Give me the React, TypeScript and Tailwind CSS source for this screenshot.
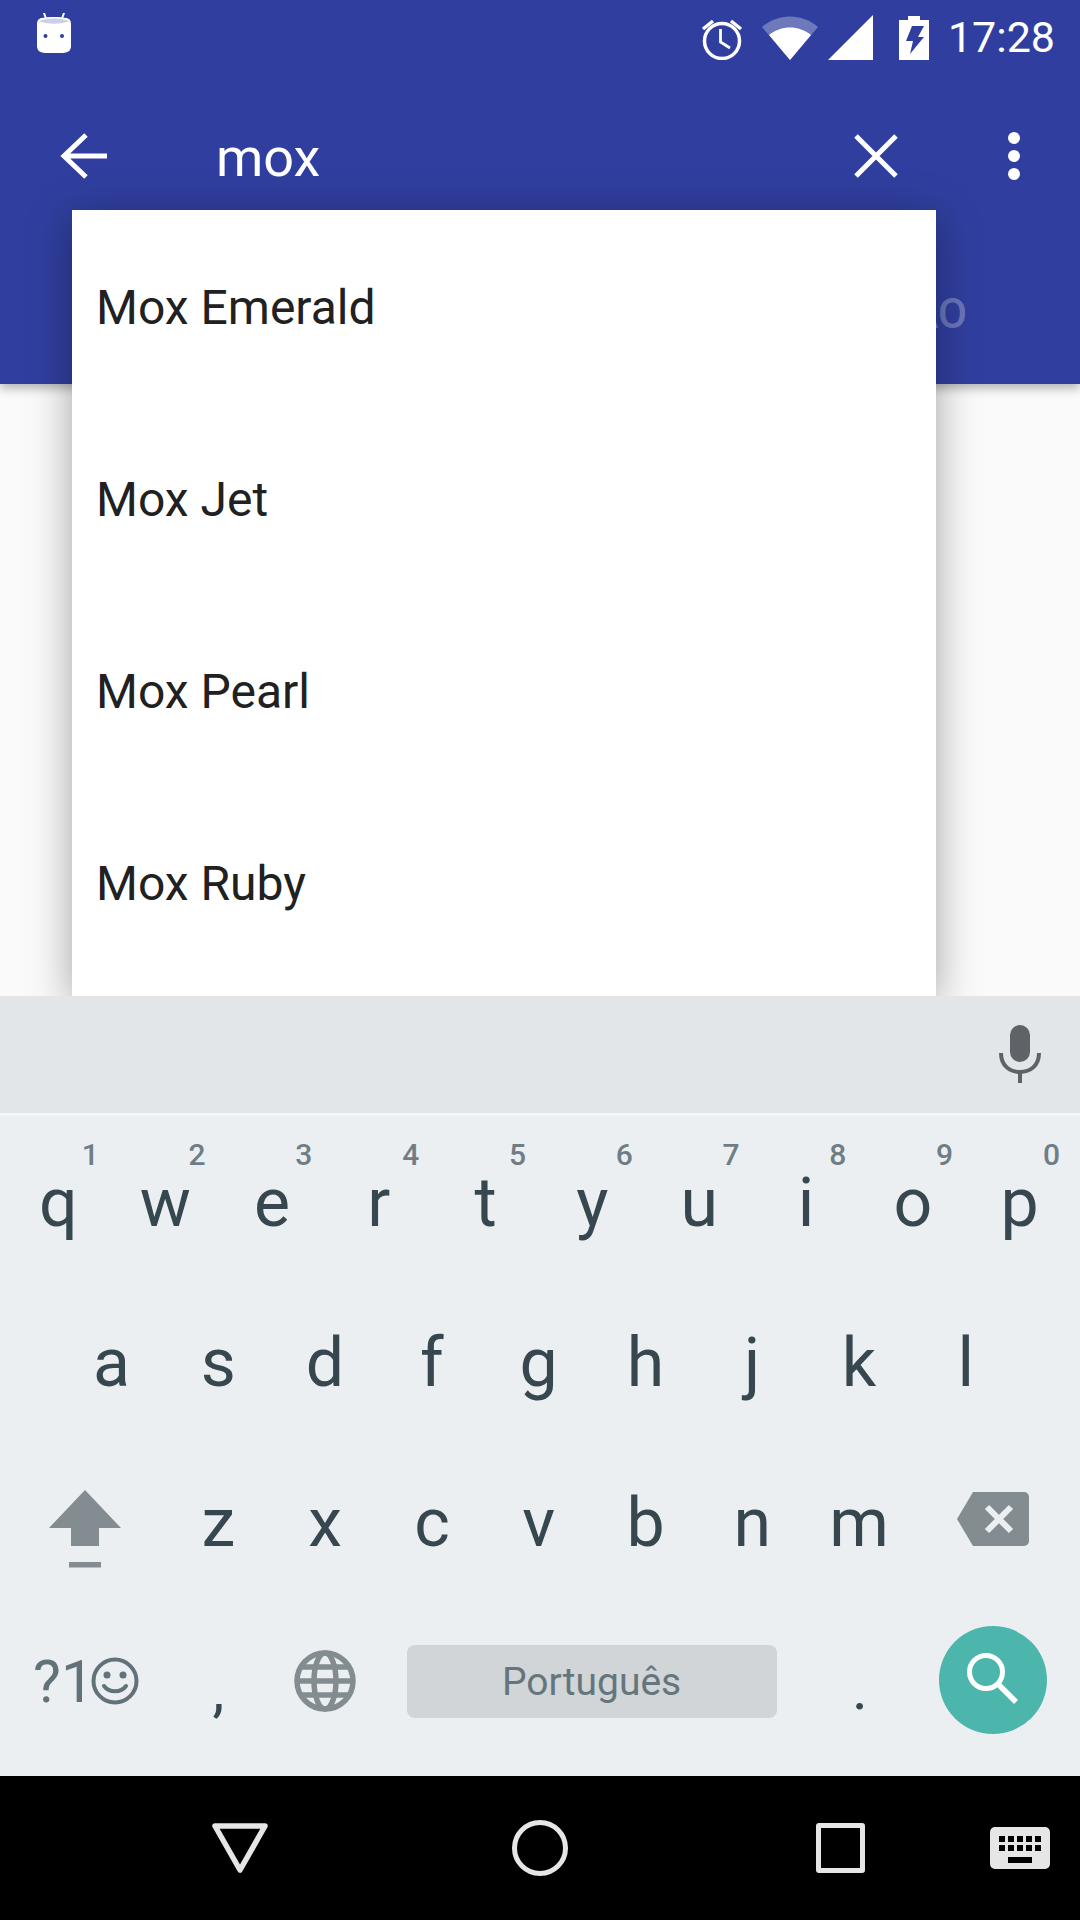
const FONT = "font-['Roboto',sans-serif]";

const rowOne = [
  ["q", "1"],
  ["w", "2"],
  ["e", "3"],
  ["r", "4"],
  ["t", "5"],
  ["y", "6"],
  ["u", "7"],
  ["i", "8"],
  ["o", "9"],
  ["p", "0"],
];
const rowTwo = ["a", "s", "d", "f", "g", "h", "j", "k", "l"];
const rowThree = ["z", "x", "c", "v", "b", "n", "m"];
const results = ["Mox Emerald", "Mox Jet", "Mox Pearl", "Mox Ruby"];

function StatusBar() {
  return (
    <div className="flex h-[75px] items-center pl-[37px] pr-[25px] text-white">
      <svg width="34" height="40" viewBox="0 0 34 40" className="mt-[-9px]">
        <path d="M7 0l2.500 7M27 0l-2.500 7" stroke="#fff" strokeWidth="2" strokeLinecap="round" />
        <path d="M0 11c0-3 1-5 4-6 8-1.500 18-1.500 26 0 3 1 4 3 4 6 .5 8 .5 15 0 23-.5 3-2 5-5 5.500-8 1.500-16 1.500-24 0-3-.5-4.500-2.500-5-5.500-.5-8-.5-15 0-23z" fill="#fff" />
        <path d="M2 8c7-3.500 23-3.500 30 0-7 3.500-23 3.500-30 0z" fill="#ccd0e6" />
        <circle cx="8.500" cy="23" r="2" fill="#303f9f" />
        <circle cx="25" cy="23" r="2" fill="#303f9f" />
      </svg>
      <div className="ml-auto flex items-center">
        <svg width="42" height="44" viewBox="0 0 42 44" fill="none" stroke="#fff">
          <circle cx="21" cy="25" r="17.500" strokeWidth="3.500" />
          <path d="M19.500 13v13l9.500 6" strokeWidth="2.800" />
          <path d="M2 13L12 5M40 13L30 5" strokeWidth="3.500" />
        </svg>
        <svg width="56" height="44" viewBox="0 0 56 44" className="ml-[19px]">
          <path d="M0 11C16-3 40-3 56 11L28 44z" fill="#fff" fillOpacity="0.3" />
          <path d="M7 19C19 9 37 9 49 19L28 44z" fill="#fff" />
        </svg>
        <svg width="46" height="46" viewBox="0 0 46 46" className="ml-[10px]">
          <path d="M45 0v45H0z" fill="#fff" />
        </svg>
        <svg width="30" height="44" viewBox="0 0 30 44" className="ml-[25px]">
          <path d="M9 0h12v4h9v40H0V4h9z" fill="#fff" />
          <path d="M13 10h12l-6 11h6L11 38l3-13H7z" fill="#303f9f" />
        </svg>
        <span className="ml-[19px] text-[43px] leading-none">17:28</span>
      </div>
    </div>
  );
}

function Toolbar() {
  return (
    <div className="flex h-[162px] items-center">
      <svg width="48" height="48" viewBox="0 0 48 48" fill="none" stroke="#fff" strokeWidth="5" className="ml-[60px]">
        <path d="M47 24H4M26 3L4 24l22 21" />
      </svg>
      <span className="ml-[108px] pt-[4px] text-[54px] leading-none text-white">mox</span>
      <svg width="44" height="44" viewBox="0 0 44 44" stroke="#fff" strokeWidth="5" className="ml-auto">
        <path d="M2 2l40 40M42 2L2 42" />
      </svg>
      <div className="ml-[110px] mr-[60px] flex flex-col gap-[6px]">
        <span className="size-[12px] rounded-full bg-white" />
        <span className="size-[12px] rounded-full bg-white" />
        <span className="size-[12px] rounded-full bg-white" />
      </div>
    </div>
  );
}

function LetterKey({ label, digit }: { label: string; digit?: string }) {
  return (
    <div className="relative flex h-[160px] w-[106.8px] items-center justify-center pt-[4px] text-[68px] leading-none text-[#37474f]">
      {digit && (
        <span className="absolute right-[13px] top-[19px] text-[30px] font-medium leading-none text-[#6f7e85]">
          {digit}
        </span>
      )}
      {label}
    </div>
  );
}

function Keyboard() {
  return (
    <div className="relative z-20 bg-[#eceff1]">
      <div className="flex h-[117px] items-center justify-end bg-[#e3e6e9] pb-[2px] pr-[39px]">
        <svg width="42" height="58" viewBox="0 0 42 58" fill="none">
          <rect x="11" y="0" width="20" height="37" rx="10" fill="#5f6368" />
          <path d="M2 28c0 13 9 19 19 19s19-6 19-19" stroke="#5f6368" strokeWidth="4" />
          <path d="M21 46v12" stroke="#5f6368" strokeWidth="4" />
        </svg>
      </div>
      <div className="h-[3px] bg-[#f3f5f6]" />
      <div className="flex flex-col pb-[15px] pl-[5px] pt-[5px]">
        <div className="flex">
          {rowOne.map(([label, digit]) => (
            <LetterKey key={label} label={label} digit={digit} />
          ))}
        </div>
        <div className="flex pl-[53px]">
          {rowTwo.map((label) => (
            <LetterKey key={label} label={label} />
          ))}
        </div>
        <div className="flex">
          <div className="flex h-[160px] w-[160px] items-center justify-center">
            <svg width="72" height="78" viewBox="0 0 72 78" fill="#838d91" className="mt-[15px]">
              <path d="M36 0l36 38H50v18H22V38H0z" />
              <rect x="20" y="72" width="32" height="5.500" />
            </svg>
          </div>
          {rowThree.map((label) => (
            <LetterKey key={label} label={label} />
          ))}
          <div className="flex h-[160px] w-[161px] items-center justify-center">
            <svg width="72" height="54" viewBox="0 0 72 54" className="mt-[-5px]">
              <path d="M16 0h51a5 5 0 015 5v44a5 5 0 01-5 5H16L0 27z" fill="#838d91" />
              <path d="M30 15l24 24M54 15L30 39" stroke="#eceff1" strokeWidth="6" />
            </svg>
          </div>
        </div>
        <div className="flex h-[160px]">
          <div className="flex w-[160px] items-center pl-[28px] text-[#62727a]">
            <span className="w-[58px] whitespace-nowrap text-[59px] leading-none">?1</span>
            <svg width="48" height="48" viewBox="0 0 48 48" fill="none" stroke="#62727a" strokeWidth="4">
              <circle cx="24" cy="24" r="21.500" />
              <circle cx="16" cy="18" r="3.500" fill="#62727a" stroke="none" />
              <circle cx="32" cy="18" r="3.500" fill="#62727a" stroke="none" />
              <path d="M13 29c5 7 17 7 22 0" strokeLinecap="round" />
            </svg>
          </div>
          <div className="flex w-[106.8px] items-center justify-center pt-[18px] text-[60px] leading-none text-[#37474f]">,</div>
          <div className="flex w-[106.8px] items-center justify-center">
            <svg width="62" height="62" viewBox="0 0 62 62" fill="none" stroke="#838d91" strokeWidth="5.500">
              <circle cx="31" cy="31" r="28" />
              <ellipse cx="31" cy="31" rx="11" ry="28" />
              <path d="M3 31h56M7 17h48M7 45h48" />
            </svg>
          </div>
          <div className="flex w-[428px] items-center pl-[28px] pr-[30px]">
            <div className="flex h-[73px] w-full items-center justify-center rounded-[8px] bg-[#d1d5d8] pt-[2px] text-[39px] text-[#66757c]">
              Português
            </div>
          </div>
          <div className="flex w-[106.8px] items-center justify-center pt-[15px] text-[60px] leading-none text-[#37474f]">.</div>
          <div className="flex w-[160px] items-center justify-center">
            <div className="mt-[-2px] flex size-[108px] items-center justify-center rounded-full bg-[#4db6ac]">
              <svg width="54" height="54" viewBox="0 0 54 54" fill="none" stroke="#fff" className="mt-[-3px]">
                <circle cx="20" cy="20" r="16.500" strokeWidth="5" />
                <path d="M32 32l18 18" strokeWidth="5.500" />
              </svg>
            </div>
          </div>
        </div>
      </div>
    </div>
  );
}

function NavBar() {
  return (
    <div className="relative z-20 flex h-[144px] items-center bg-black">
      <svg width="56" height="50" viewBox="0 0 56 50" fill="none" stroke="#e6e6e6" strokeWidth="5.500" strokeLinejoin="round" className="ml-[212px]">
        <path d="M3 3h50L28 47z" />
      </svg>
      <span className="ml-[244px] size-[56px] rounded-full border-[5.5px] border-[#e6e6e6]" />
      <span className="ml-[248px] h-[50px] w-[49px] rounded-[3px] border-[5.5px] border-[#e6e6e6]" />
      <svg width="60" height="42" viewBox="0 0 60 42" className="ml-[125px]">
        <rect width="60" height="42" rx="5" fill="#e6e6e6" />
        <g fill="#000">
          <rect x="9" y="9" width="6" height="6" />
          <rect x="18" y="9" width="6" height="6" />
          <rect x="27" y="9" width="6" height="6" />
          <rect x="36" y="9" width="6" height="6" />
          <rect x="45" y="9" width="6" height="6" />
          <rect x="9" y="18" width="6" height="6" />
          <rect x="18" y="18" width="6" height="6" />
          <rect x="27" y="18" width="6" height="6" />
          <rect x="36" y="18" width="6" height="6" />
          <rect x="45" y="18" width="6" height="6" />
          <rect x="18" y="30" width="24" height="6" />
        </g>
      </svg>
    </div>
  );
}

export default function App() {
  return (
    <div className={`relative flex h-[1920px] w-[1080px] flex-col overflow-hidden bg-[#fafafa] ${FONT}`}>
      <div className="relative z-0 h-[384px] bg-[#303f9f] shadow-[0_4px_10px_rgba(0,0,0,0.3)]">
        <StatusBar />
        <Toolbar />
        <div className="flex h-[147px] items-center justify-end pr-[113px] pt-[5px] text-[42px] font-medium text-white/30">ÇÃO</div>
      </div>
      <div className="flex-1" />
      <div className="absolute left-[72px] top-[210px] z-10 h-[786px] w-[864px] bg-white shadow-[0_8px_40px_rgba(0,0,0,0.35)]">
        {results.map((name) => (
          <div key={name} className="flex h-[192px] items-center pl-[24px] pt-[3px] text-[48px] text-[#212121]">
            {name}
          </div>
        ))}
      </div>
      <Keyboard />
      <NavBar />
    </div>
  );
}
